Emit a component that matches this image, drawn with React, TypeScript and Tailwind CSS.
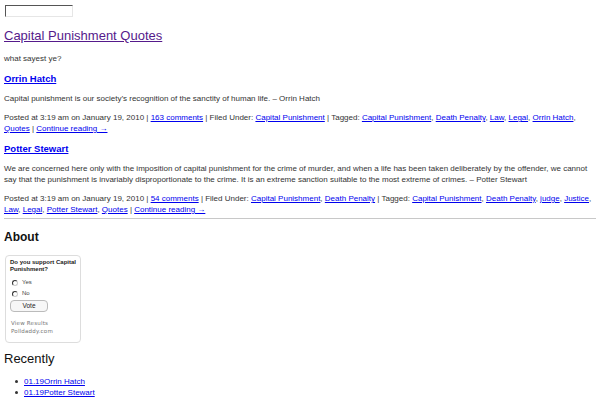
import React from 'react';

const A: React.FC<{ children: React.ReactNode }> = ({ children }) => (
  <a href="#" className="text-[#0000ee] underline">{children}</a>
);

const posts = [
  {
    title: 'Orrin Hatch',
    body: 'Capital punishment is our society\u2019s recognition of the sanctity of human life. \u2013 Orrin Hatch',
    comments: '163 comments',
    filed: ['Capital Punishment'],
    tags: ['Capital Punishment', 'Death Penalty', 'Law', 'Legal', 'Orrin Hatch', 'Quotes'],
  },
  {
    title: 'Potter Stewart',
    body: 'We are concerned here only with the imposition of capital punishment for the crime of murder, and when a life has been taken deliberately by the offender, we cannot say that the punishment is invariably disproportionate to the crime. It is an extreme sanction suitable to the most extreme of crimes. \u2013 Potter Stewart',
    comments: '54 comments',
    filed: ['Capital Punishment', 'Death Penalty'],
    tags: ['Capital Punishment', 'Death Penalty', 'judge', 'Justice', 'Law', 'Legal', 'Potter Stewart', 'Quotes'],
  },
];

function joinLinks(items: string[]) {
  return items.map((t, i) => (
    <React.Fragment key={t}>
      <A>{t}</A>
      {i < items.length - 1 ? ', ' : ''}
    </React.Fragment>
  ));
}

const Radio = () => (
  <span className="w-[6px] h-[6px] rounded-full border border-t-[#333] border-l-[#333] border-r-[#ccc] border-b-[#ccc] bg-white" />
);

export default function App() {
  return (
    <div className="w-[600px] h-[400px] overflow-hidden bg-white px-[4px] pt-[5px] text-[#333] font-['Liberation_Sans',Arial,sans-serif]">
      {/* search box */}
      <input
        type="text"
        className="block ml-[1px] w-[68px] h-[12px] border border-t-[#555] border-l-[#555] border-b-[#e6e6e6] border-r-[#e6e6e6] bg-white"
      />

      <h1 className="mt-[10px] text-[13px] leading-[18px]">
        <a href="#" className="text-[#551a8b] underline">Capital Punishment Quotes</a>
      </h1>
      <p className="mt-[8px] text-[8px] leading-[11px]">what sayest ye?</p>

      {posts.map((p) => (
        <div key={p.title}>
          <h2 className="mt-[8px] text-[9.5px] leading-[13px] font-bold">
            <a href="#" className="text-[#0000ee] underline">{p.title}</a>
          </h2>
          <p className="mt-[8px] text-[8px] leading-[11px]">{p.body}</p>
          <p className="mt-[8px] text-[8px] leading-[11px]">
            Posted at 3:19 am on January 19, 2010 | <A>{p.comments}</A> | Filed Under: {joinLinks(p.filed)} | Tagged: {joinLinks(p.tags)} | <A>Continue reading →</A>
          </p>
        </div>
      ))}

      <hr className="mt-[3px] border-0 border-t border-[#c8c8c8]" />

      <h2 className="mt-[10px] text-[12px] leading-[16px] font-bold text-[#111]">About</h2>

      {/* poll widget */}
      <div className="mt-[10px] ml-[1px] w-[76px] h-[88px] border border-[#ddd] rounded-[4px] pl-[4px] pr-[2px] pt-[3px]">
        <div className="text-[6px] leading-[7px] font-bold text-[#222]">Do you support Capital Punishment?</div>
        <div className="mt-[6px] flex flex-col gap-[4px] text-[6px] leading-[7px] text-[#444]">
          <label className="flex items-center gap-[4px] pl-[2px]">
            <Radio />
            Yes
          </label>
          <label className="flex items-center gap-[4px] pl-[2px]">
            <Radio />
            No
          </label>
        </div>
        <div className="mt-[3px] w-[38px] h-[12px] rounded-[4px] border border-[#bbb] bg-[#f7f7f7] flex items-center justify-center text-[6.5px] text-[#222]">
          Vote
        </div>
        <div className="mt-[7px] pl-[1px] font-['DejaVu_Sans',sans-serif] text-[5.5px] leading-[8px] text-[#777] tracking-[0.2px]">View Results</div>
        <div className="pl-[1px] font-['DejaVu_Sans',sans-serif] text-[5.5px] leading-[8px] text-[#777] tracking-[0.2px]">Polldaddy.com</div>
      </div>

      <h2 className="mt-[8px] text-[13px] leading-[16px] text-[#111]">Recently</h2>
      <ul className="mt-[9px] pl-[11px] text-[8px] leading-[11px]">
        {['01.19Orrin Hatch', '01.19Potter Stewart'].map((t) => (
          <li key={t} className="flex items-center gap-[6px]">
            <span className="w-[3px] h-[3px] rounded-full bg-[#333]" />
            <A>{t}</A>
          </li>
        ))}
      </ul>
    </div>
  );
}
